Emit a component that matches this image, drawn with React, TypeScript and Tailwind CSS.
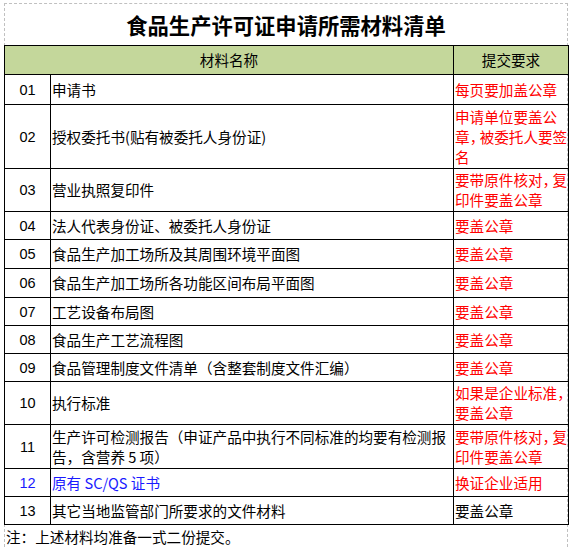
import React from 'react';

type Row = {
  no: string;
  name: React.ReactNode;
  req: React.ReactNode;
  h: string;
  blue?: boolean;
  black?: boolean;
};

// narrow full-width comma, as in the sheet
const Comma = () => (
  <span className="inline-block w-[10px] [font-feature-settings:'halt']">，</span>
);

const rows: Row[] = [
  { no: '01', name: '申请书', req: '每页要加盖公章', h: 'h-[30px]' },
  {
    no: '02',
    name: '授权委托书(贴有被委托人身份证)',
    req: (
      <>
        申请单位要盖公
        <br />
        章<Comma />被委托人要签
        <br />名
      </>
    ),
    h: 'h-[64px]',
  },
  {
    no: '03',
    name: '营业执照复印件',
    req: (
      <>
        要带原件核对<Comma />复
        <br />
        印件要盖公章
      </>
    ),
    h: 'h-[43px]',
  },
  { no: '04', name: '法人代表身份证、被委托人身份证', req: '要盖公章', h: 'h-[28px]' },
  { no: '05', name: '食品生产加工场所及其周围环境平面图', req: '要盖公章', h: 'h-[29px]' },
  { no: '06', name: '食品生产加工场所各功能区间布局平面图', req: '要盖公章', h: 'h-[29px]' },
  { no: '07', name: '工艺设备布局图', req: '要盖公章', h: 'h-[28px]' },
  { no: '08', name: '食品生产工艺流程图', req: '要盖公章', h: 'h-[28px]' },
  { no: '09', name: '食品管理制度文件清单（含整套制度文件汇编）', req: '要盖公章', h: 'h-[28px]' },
  {
    no: '10',
    name: '执行标准',
    req: (
      <>
        如果是企业标准<Comma />
        <br />
        要盖公章
      </>
    ),
    h: 'h-[43px]',
  },
  {
    no: '11',
    name: (
      <>
        生产许可检测报告（申证产品中执行不同标准的均要有检测报
        <br />
        告，含营养 5 项）
      </>
    ),
    req: (
      <>
        要带原件核对<Comma />复
        <br />
        印件要盖公章
      </>
    ),
    h: 'h-[44px]',
  },
  { no: '12', name: '原有 SC/QS 证书', req: '换证企业适用', h: 'h-[28px]', blue: true },
  { no: '13', name: '其它当地监管部门所要求的文件材料', req: '要盖公章', h: 'h-[28px]', black: true },
];

export default function App() {
  return (
    <div className="w-[571px] h-[547px] bg-white overflow-hidden pt-[3px] pl-[4px] font-['Noto_Sans_CJK_SC',sans-serif] text-[14.6px] text-black">
      <div className="w-[564px] h-[544px] border border-b-0 border-dashed border-[#c0c0c0]">
        <div className="h-[41px] flex items-center justify-center text-[21.3px] font-bold leading-none">
          食品生产许可证申请所需材料清单
        </div>
        <table className="-mx-px w-[564px] border-collapse table-fixed leading-[20px]">
          <colgroup>
            <col className="w-[46px]" />
            <col className="w-[403px]" />
            <col className="w-[115px]" />
          </colgroup>
          <thead>
            <tr className="h-[29px] bg-[#c4d79b]">
              <th colSpan={2} className="border border-black font-normal text-center p-0">
                材料名称
              </th>
              <th className="border border-black font-normal text-center p-0">提交要求</th>
            </tr>
          </thead>
          <tbody>
            {rows.map((r) => (
              <tr key={r.no} className={r.h}>
                <td
                  className={`border border-black p-0 text-center font-['Liberation_Sans',sans-serif] text-[14.5px] ${
                    r.blue ? 'text-[#1a1aff]' : 'text-black'
                  }`}
                >
                  {r.no}
                </td>
                <td
                  className={`border border-black py-0 pl-[1px] pr-0 whitespace-nowrap ${
                    r.blue ? 'text-[#1a1aff]' : 'text-black'
                  }`}
                >
                  {r.name}
                </td>
                <td
                  className={`border border-black py-0 pl-[1px] pr-0 whitespace-nowrap ${
                    r.black ? 'text-black' : 'text-[#ff0000]'
                  }`}
                >
                  {r.req}
                </td>
              </tr>
            ))}
          </tbody>
        </table>
        <div className="h-[23px] pl-[1px] flex items-center">注：上述材料均准备一式二份提交。</div>
      </div>
    </div>
  );
}
